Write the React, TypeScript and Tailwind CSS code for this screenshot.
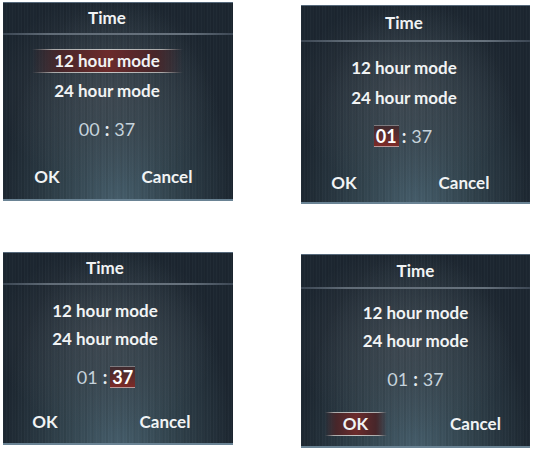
import React from 'react';

type Sel = 'mode' | 'hour' | 'min' | 'ok';

type ScreenProps = {
  box: string;
  hdr: string;
  cw: string;
  g1: string;
  g2: string;
  g4: string;
  sel: Sel;
  hour: string;
};

const redBar =
  'bg-[linear-gradient(90deg,rgba(60,30,35,0)_0%,#47262a_18%,#6c2b2b_50%,#47262a_82%,rgba(60,30,35,0)_100%)]';
const barLine =
  'bg-[linear-gradient(90deg,rgba(190,190,190,0)_0%,#a9a9a9_14%,#c4c4c4_50%,#a9a9a9_86%,rgba(190,190,190,0)_100%)]';

function Digits({ text, on }: { text: string; on: boolean }) {
  if (!on) return <span className="px-[2px]">{text}</span>;
  return (
    <span className="inline-flex h-[22px] items-center px-[2px] bg-gradient-to-b from-[#3f2a2f] to-[#7e2a27] border-t border-b border-t-[#7d7a7e] border-b-[#b8999a] font-bold text-white">
      {text}
    </span>
  );
}

function Screen({ box, hdr, cw, g1, g2, g4, sel, hour }: ScreenProps) {
  return (
    <div className={`relative overflow-hidden bg-[#1c2630] ${box}`}>
      {/* brushed metal background */}
      <div className="absolute inset-0 bg-[radial-gradient(ellipse_at_50%_108%,#48606e_0%,#33454f_32%,rgba(40,52,64,0)_72%)]" />
      <div className="absolute inset-0 bg-[radial-gradient(ellipse_at_45%_45%,rgba(72,78,86,0.6)_0%,rgba(40,50,60,0)_62%)]" />
      <div className="absolute inset-0 bg-[repeating-linear-gradient(90deg,rgba(255,255,255,0.025)_0px,rgba(255,255,255,0.025)_1px,rgba(0,0,0,0)_1px,rgba(0,0,0,0)_3px)]" />
      <div className="absolute inset-0 bg-[repeating-linear-gradient(90deg,rgba(0,0,0,0)_0px,rgba(0,0,0,0)_5px,rgba(0,0,0,0.05)_5px,rgba(0,0,0,0.05)_7px)]" />
      <div className="absolute left-0 right-0 top-0 h-[1px] bg-[#55687a]" />
      <div className="absolute left-0 right-0 bottom-0 h-[2px] bg-[#6a8394]" />

      <div className="relative flex flex-col font-['Lato','Liberation_Sans',sans-serif] text-[#f1f3f4]">
        <div className={`${hdr} ${cw} flex items-center justify-center text-[17px] font-bold`}>Time</div>
        <div className="h-[2px] bg-[linear-gradient(90deg,#3c4754,#616c77_20%,#67727d_80%,#3c4754)]" />

        <div className={`${cw} flex flex-col items-center`}>
          <div className={`${g1} relative flex h-[24px] w-[151px] items-center justify-center text-[17px] font-bold ${sel === 'mode' ? redBar : ''}`}>
            {sel === 'mode' && (
              <>
                <div className={`absolute left-0 right-0 top-0 h-[1px] ${barLine}`} />
                <div className={`absolute left-0 right-0 bottom-0 h-[1px] ${barLine}`} />
              </>
            )}
            12 hour mode
          </div>

          <div className={`${g2} flex h-[24px] items-center justify-center text-[17px] font-bold`}>24 hour mode</div>

          <div className="mt-[14px] flex h-[24px] items-center justify-center text-[18px] text-[#c6d3dc]">
            <Digits text={hour} on={sel === 'hour'} />
            <span className="px-[3px] font-bold text-[#e6ecef]">:</span>
            <Digits text="37" on={sel === 'min'} />
          </div>

          <div className={`${g4} flex h-[24px] gap-[58px] text-[17px] font-bold`}>
            <div className={`relative flex w-[62px] items-center justify-center ${sel === 'ok' ? redBar : ''}`}>
              {sel === 'ok' && (
                <>
                  <div className={`absolute left-0 right-0 top-0 h-[1px] ${barLine}`} />
                  <div className={`absolute left-0 right-0 bottom-0 h-[1px] ${barLine}`} />
                </>
              )}
              OK
            </div>
            <div className="flex w-[62px] items-center justify-center">Cancel</div>
          </div>
        </div>
      </div>
    </div>
  );
}

export default function App() {
  return (
    <div className="h-[451px] w-[534px] bg-white">
      <div className="flex items-start">
        <Screen
          box="ml-[3px] mt-[2px] h-[199px] w-[230px]"
          hdr="h-[31px]"
          cw="w-[208px]"
          g1="mt-[14px]"
          g2="mt-[6px]"
          g4="mt-[24px]"
          sel="mode"
          hour="00"
        />
        <Screen
          box="ml-[68px] mt-[5px] h-[199px] w-[229px]"
          hdr="h-[35px]"
          cw="w-[206px]"
          g1="mt-[14px]"
          g2="mt-[6px]"
          g4="mt-[23px]"
          sel="hour"
          hour="01"
        />
      </div>
      <div className="flex items-start">
        <Screen
          box="ml-[3px] mt-[48px] h-[193px] w-[230px]"
          hdr="h-[31px]"
          cw="w-[204px]"
          g1="mt-[14px]"
          g2="mt-[4px]"
          g4="mt-[21px]"
          sel="min"
          hour="01"
        />
        <Screen
          box="ml-[68px] mt-[50px] h-[194px] w-[229px]"
          hdr="h-[33px]"
          cw="w-[229px]"
          g1="mt-[12px]"
          g2="mt-[4px]"
          g4="mt-[21px]"
          sel="ok"
          hour="01"
        />
      </div>
    </div>
  );
}
